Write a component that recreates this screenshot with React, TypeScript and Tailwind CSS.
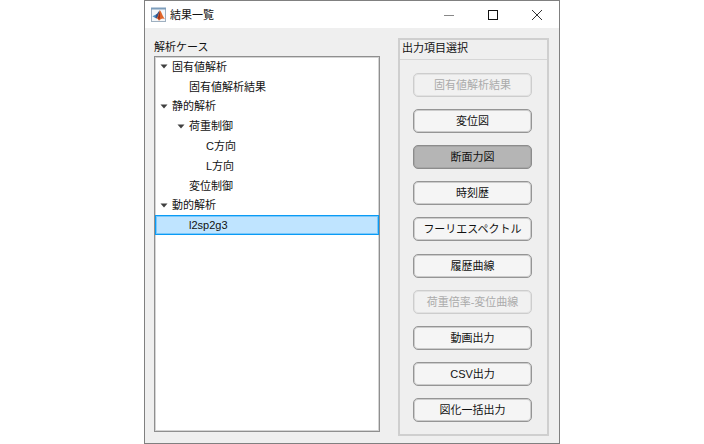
import clsx from "clsx";

type TreeItem = { label: string; level: number; open?: boolean; selected?: boolean };

const cases: TreeItem[] = [
  { label: "固有値解析", level: 0, open: true },
  { label: "固有値解析結果", level: 1 },
  { label: "静的解析", level: 0, open: true },
  { label: "荷重制御", level: 1, open: true },
  { label: "C方向", level: 2 },
  { label: "L方向", level: 2 },
  { label: "変位制御", level: 1 },
  { label: "動的解析", level: 0, open: true },
  { label: "l2sp2g3", level: 1, selected: true },
];

const outputs = [
  { label: "固有値解析結果", disabled: true },
  { label: "変位図" },
  { label: "断面力図", pressed: true },
  { label: "時刻歴" },
  { label: "フーリエスペクトル" },
  { label: "履歴曲線" },
  { label: "荷重倍率-変位曲線", disabled: true },
  { label: "動画出力" },
  { label: "CSV出力" },
  { label: "図化一括出力" },
];

const indent = ["pl-0", "pl-[17px]", "pl-[34px]"];

function AppIcon() {
  return (
    <svg viewBox="0 0 16 16" className="size-4 shrink-0" aria-hidden="true">
      <rect x="0.5" y="1.5" width="14" height="13" fill="#f4f7fa" stroke="#9fb0c0" />
      <path d="M0 1.5H15" stroke="#7d9dbb" strokeWidth="2" />
      <path d="M1.4 9.2 5 7.6 7 8.8 4.4 11Z" fill="#4a90c8" />
      <path d="M5 7.6C6.6 6.8 7.4 4.4 8.8 3.2L7.6 9 5.6 11.4 4.4 11Z" fill="#35558a" />
      <path d="M8.8 3.2C10.2 3.8 11.4 9 14 12.2 12 11 10.2 11.4 8 13.8 7.4 12.4 6.8 11.4 5.6 11.4 7.2 9.4 7.8 5.4 8.8 3.2Z" fill="#e0662a" />
      <path d="M8.6 4.6C9.2 7 9.2 9.4 8.8 11.4L8 12.8C7.6 12 7.2 11.4 6.6 11 7.8 9.2 8.2 6.6 8.6 4.6Z" fill="#9c3018" />
    </svg>
  );
}

function TitleBar() {
  return (
    <header className="flex h-[27px] items-center bg-white pl-[6px]">
      <AppIcon />
      <h1 className="ml-[3px] flex-1">結果一覧</h1>
      <button type="button" aria-label="最小化" className="flex h-full w-11 items-center justify-center">
        <svg viewBox="0 0 10 10" className="size-[10px]">
          <path d="M0 5.5H10" stroke="#888" />
        </svg>
      </button>
      <button type="button" aria-label="最大化" className="flex h-full w-11 items-center justify-center">
        <svg viewBox="0 0 10 10" className="size-[10px]">
          <rect x="0.5" y="0.5" width="9" height="9" fill="none" stroke="#111" />
        </svg>
      </button>
      <button type="button" aria-label="閉じる" className="flex h-full w-11 items-center justify-center">
        <svg viewBox="0 0 10 10" className="size-[10px]">
          <path d="M0 0 10 10M10 0 0 10" stroke="#333" />
        </svg>
      </button>
    </header>
  );
}

function CaseTree() {
  return (
    <ul
      role="tree"
      aria-labelledby="case-label"
      className="flex-1 border border-[#8f8f8f] bg-white shadow-[inset_0_0_0_1px_#d4d4d4]"
    >
      <li role="none">
        <ul role="group" className="grid h-[178px] grid-rows-9">
          {cases.map((item) => (
            <li
              key={item.label}
              role="treeitem"
              aria-level={item.level + 1}
              aria-expanded={item.open}
              aria-selected={!!item.selected}
              className={clsx(
                "flex items-center border",
                item.selected
                  ? "border-[#0a9bf5] bg-[#bfe4ff] shadow-[inset_0_0_0_1px_#7cc8fa]"
                  : "border-transparent",
              )}
            >
              <span className={clsx("flex items-center", indent[item.level])}>
                <span className="flex w-4 justify-center">
                  {item.open && (
                    <svg viewBox="0 0 8 5" className="h-[5px] w-2" aria-hidden="true">
                      <path d="M0.5 0.5H7.5L4 4.5Z" fill="#404040" />
                    </svg>
                  )}
                </span>
                {item.label}
              </span>
            </li>
          ))}
        </ul>
      </li>
    </ul>
  );
}

export default function App() {
  return (
    <div className="min-h-screen bg-white font-['Liberation_Sans','Noto_Sans_CJK_JP',sans-serif] text-[11px] leading-4 text-[#111]">
      <div className="mx-auto flex min-h-screen w-full max-w-[416px] flex-col border border-[#808080] bg-[#efefef]">
        <TitleBar />
        <main className="flex flex-1 gap-[18px] pt-[10px] pr-[10px] pb-[7px] pl-[9px]">
          <section className="flex flex-1 flex-col pb-1">
            <h2 id="case-label" className="h-[18px] pt-px">
              解析ケース
            </h2>
            <CaseTree />
          </section>
          <section className="flex w-[151px] flex-col border-2 border-[#cfcfcf]">
            <h2 className="h-5 border-b border-[#d6d6d6] pl-[2px]">出力項目選択</h2>
            <div className="flex flex-1 flex-col justify-between pt-[13px] pr-[15px] pb-3 pl-[13px]">
              {outputs.map((item) => (
                <button
                  key={item.label}
                  type="button"
                  disabled={item.disabled}
                  aria-pressed={item.pressed}
                  className={clsx(
                    "h-6 rounded-[5px] border whitespace-nowrap",
                    item.disabled &&
                      "border-[#cdcdcd] bg-[#f1f1f1] text-[#ababab] shadow-[inset_0_0_0_1px_#e2e2e2]",
                    item.pressed &&
                      "border-[#8c8c8c] bg-[#b5b5b5] shadow-[inset_0_0_0_1px_#a6a6a6]",
                    !item.disabled &&
                      !item.pressed &&
                      "border-[#959595] bg-[#f5f5f5] shadow-[inset_0_0_0_1px_#cccccc]",
                  )}
                >
                  {item.label}
                </button>
              ))}
            </div>
          </section>
        </main>
      </div>
    </div>
  );
}
